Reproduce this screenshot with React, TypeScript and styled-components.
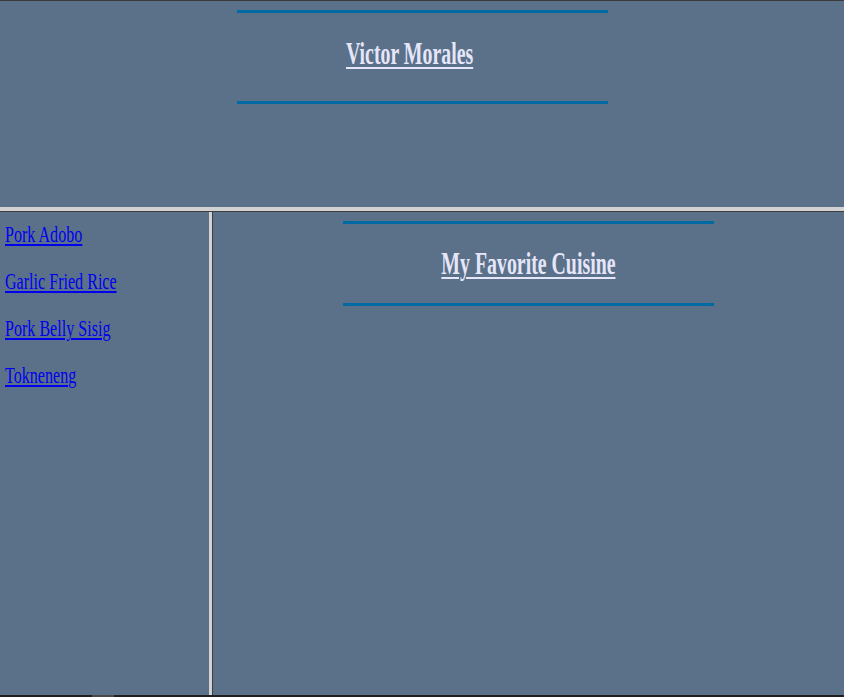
import React from "react"
import styled, { createGlobalStyle } from "styled-components"

const GlobalStyle = createGlobalStyle`
  html, body {
    margin: 0;
    padding: 0;
    background: #202020;
  }
  #root {
    height: 100vh;
  }
`

const PANE_BG = "#5a7189"
const RULE_BLUE = "#006ba3"
const TITLE_INK = "#e6e6fa"

const Page = styled.div`
  height: 100vh;
  display: grid;
  grid-template-rows: 1px 206px 4px 1px 1fr 2px;
  font-family: "Liberation Serif", "Times New Roman", serif;
`

const TopEdge = styled.div`
  background: #3c3c3c;
`

const Banner = styled.header`
  background: ${PANE_BG};
  display: flex;
  flex-direction: column;
  align-items: center;
  padding-top: 9px;
  overflow: hidden;
`

const FrameLight = styled.div`
  background: #d2d2d2;
`

const FrameDark = styled.div`
  background: #3e3e3e;
`

const Body = styled.div`
  display: grid;
  grid-template-columns: 209px 3px 1px 1fr;
  min-height: 0;
`

const Sidebar = styled.nav`
  background: ${PANE_BG};
  display: flex;
  flex-direction: column;
  align-items: flex-start;
  gap: 20px;
  padding: 9px 0 0 5px;
  overflow: hidden;
`

const Content = styled.main`
  background: ${PANE_BG};
  display: flex;
  flex-direction: column;
  align-items: center;
  padding-top: 9px;
  overflow: hidden;
`

const Rule = styled.div`
  width: 371px;
  height: 3px;
  background: ${RULE_BLUE};
  flex-shrink: 0;
`

const Title = styled.h1<{ $top: number; $bottom: number; $shift?: number }>`
  margin: ${p => p.$top}px 0 ${p => p.$bottom}px;
  padding-right: ${p => p.$shift ?? 0}px;
  height: 36px;
  line-height: 36px;
  font-size: 32px;
  font-weight: bold;
  text-align: center;
  white-space: nowrap;
  color: ${TITLE_INK};
`

const TitleText = styled.span<{ $squeeze: number }>`
  display: inline-block;
  transform: scaleX(${p => p.$squeeze});
  transform-origin: center;
  text-decoration: underline;
  text-decoration-thickness: 2px;
  text-underline-offset: 3px;
`

const NavLink = styled.a`
  display: inline-block;
  font-size: 24px;
  line-height: 27px;
  color: #0000ee;
  white-space: nowrap;
  transform: scaleX(0.67);
  transform-origin: left center;
  text-decoration: underline;
  text-decoration-thickness: 2px;
  text-underline-offset: 2px;
`

const BottomBar = styled.div`
  background: #202020;
  display: flex;
`

const Thumb = styled.div`
  width: 22px;
  margin-left: 92px;
  background: #4a4a4a;
`

const dishes = ["Pork Adobo", "Garlic Fried Rice", "Pork Belly Sisig", "Tokneneng"]

export default function App() {
  return (
    <>
      <GlobalStyle />
      <Page>
        <TopEdge />
        <Banner>
          <Rule />
          <Title $top={22} $bottom={30} $shift={25}>
            <TitleText $squeeze={0.62}>Victor Morales</TitleText>
          </Title>
          <Rule />
        </Banner>
        <FrameLight />
        <FrameDark />
        <Body>
          <Sidebar>
            {dishes.map(d => (
              <NavLink key={d} href="#">{d}</NavLink>
            ))}
          </Sidebar>
          <FrameLight />
          <FrameDark />
          <Content>
            <Rule />
            <Title $top={21} $bottom={22}>
              <TitleText $squeeze={0.62}>My Favorite Cuisine</TitleText>
            </Title>
            <Rule />
          </Content>
        </Body>
        <BottomBar>
          <Thumb />
        </BottomBar>
      </Page>
    </>
  )
}
